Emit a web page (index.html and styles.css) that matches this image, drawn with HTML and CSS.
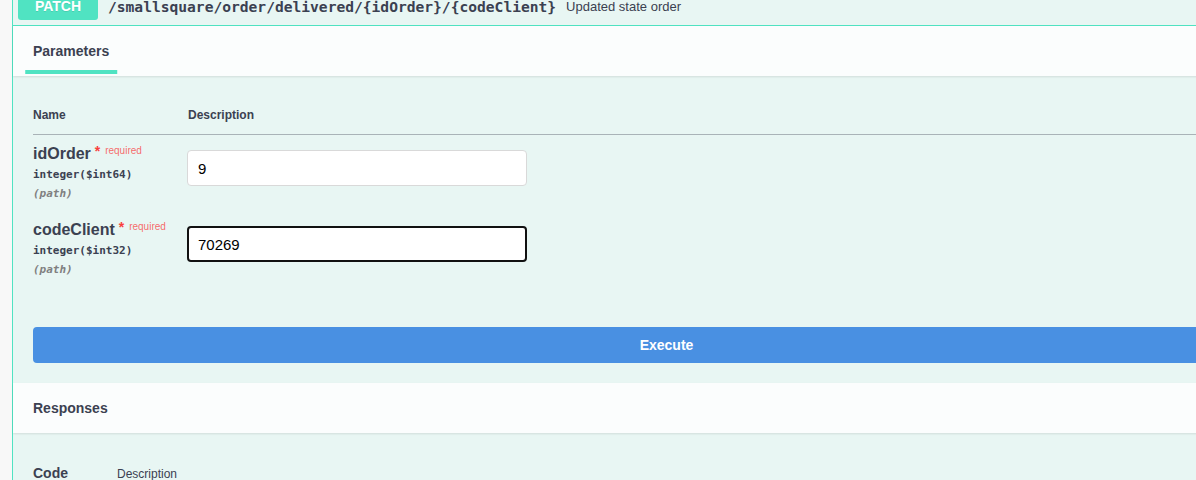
FILE: index.html
```html
<!DOCTYPE html>
<html>
<head>
<meta charset="utf-8">
<link rel="stylesheet" href="styles.css">
</head>
<body>
<div class="opblock">
  <div class="summary">
    <span class="method">PATCH</span>
    <span class="path">/smallsquare/order/delivered/{idOrder}/{codeClient}</span>
    <span class="summary-desc">Updated state order</span>
  </div>
  <div class="section-header">
    <h4 class="tab-item"><span>Parameters</span></h4>
  </div>
  <div class="table-container">
    <table class="params">
      <thead>
        <tr><th class="col-name">Name</th><th>Description</th></tr>
      </thead>
      <tbody>
        <tr>
          <td class="col-name">
            <div class="pname">idOrder<span class="star">&nbsp;*</span><span class="req">required</span></div>
            <div class="ptype">integer<span class="fmt">($int64)</span></div>
            <div class="pin">(path)</div>
          </td>
          <td class="col-desc"><input class="field" type="text" value="9"></td>
        </tr>
        <tr>
          <td class="col-name">
            <div class="pname">codeClient<span class="star">&nbsp;*</span><span class="req">required</span></div>
            <div class="ptype">integer<span class="fmt">($int32)</span></div>
            <div class="pin">(path)</div>
          </td>
          <td class="col-desc"><input class="field focused" type="text" value="70269"></td>
        </tr>
      </tbody>
    </table>
  </div>
  <div class="execute-wrapper">
    <button class="execute">Execute</button>
  </div>
  <div class="section-header">
    <h4 class="plain">Responses</h4>
  </div>
  <div class="responses-inner">
    <table class="responses">
      <thead>
        <tr><th class="col-code">Code</th><th class="col-rdesc">Description</th></tr>
      </thead>
    </table>
  </div>
</div>
</body>
</html>
```

FILE: styles.css
```css
html, body {
  margin: 0;
  padding: 0;
}
body {
  background: #f8f8f8;
  overflow: hidden;
  width: 1196px;
  height: 480px;
  font-family: "Liberation Sans", Arial, sans-serif;
  color: #3b4151;
}
.opblock {
  box-sizing: border-box;
  width: 1309px;
  margin: -14px 0 0 12px;
  border: 1px solid #50e3c2;
  border-radius: 4px;
  background: #e8f6f3;
}
.summary {
  display: flex;
  align-items: center;
  padding: 5px;
  border-bottom: 1px solid #50e3c2;
}
.method {
  min-width: 80px;
  padding: 6px 0;
  background: #50e3c2;
  color: #fff;
  font-weight: 700;
  font-size: 14px;
  line-height: 16px;
  text-align: center;
  border-radius: 3px;
  text-shadow: 0 1px 0 rgba(0,0,0,.1);
}
.path {
  margin-left: 10px;
  font-family: "DejaVu Sans Mono", "Liberation Mono", monospace;
  font-weight: 700;
  font-size: 14.6px;
  color: #3b4151;
}
.summary-desc {
  margin-left: 10px;
  font-size: 13px;
  color: #3b4151;
}
.section-header {
  box-sizing: border-box;
  display: flex;
  align-items: center;
  min-height: 50px;
  padding: 8px 20px;
  background: rgba(255,255,255,.8);
  box-shadow: 0 1px 2px rgba(0,0,0,.1);
}
.section-header h4 {
  margin: 0;
  font-size: 14px;
  font-weight: 700;
  line-height: 16px;
  color: #3b4151;
}
.tab-item span {
  position: relative;
  display: inline-block;
}
.tab-item span::after {
  content: "";
  position: absolute;
  left: 50%;
  bottom: -15px;
  width: 120%;
  height: 4px;
  transform: translateX(-50%);
  background: #50e3c2;
}
.table-container {
  padding: 20px;
}
table {
  border-collapse: collapse;
  width: 100%;
}
.params th {
  text-align: left;
  font-size: 12px;
  font-weight: 700;
  line-height: 14px;
  padding: 12px 0;
  border-bottom: 1px solid #a9b3b7;
  color: #3b4151;
}
.params .col-name {
  width: 155px;
}
.params td {
  padding: 10px 0;
  vertical-align: top;
}
.pname {
  font-size: 16px;
  font-weight: 700;
  line-height: 18px;
  color: #3b4151;
}
.star {
  color: #f93e3e;
  font-size: 14px;
  position: relative;
  top: -3px;
}
.req {
  color: rgba(255,0,0,.6);
  font-size: 10px;
  font-weight: 400;
  padding: 0 5px;
  position: relative;
  top: -5px;
}
.ptype {
  padding: 2px 0 0;
  font-family: "DejaVu Sans Mono", "Liberation Mono", monospace;
  font-size: 11px;
  font-weight: 700;
  line-height: 15px;
  color: #3b4151;
}
.pin {
  padding: 4px 0 0;
  font-family: "DejaVu Sans Mono", "Liberation Mono", monospace;
  font-size: 11px;
  font-style: italic;
  font-weight: 700;
  line-height: 15px;
  color: #808080;
}
.field {
  box-sizing: border-box;
  display: block;
  width: 340px;
  height: 36px;
  margin: 5px 0 0 -1px;
  padding: 8px 10px;
  border: 1px solid #d9d9d9;
  border-radius: 4px;
  background: #fff;
  font-family: "Liberation Sans", Arial, sans-serif;
  font-size: 15px;
  color: #000;
  outline: none;
}
.field.focused {
  border: 2px solid #111;
  padding: 7px 9px;
}
.execute-wrapper {
  padding: 20px;
}
.execute {
  display: block;
  box-sizing: border-box;
  width: 100%;
  height: 36px;
  border: 2px solid #4990e2;
  border-radius: 4px;
  background: #4990e2;
  color: #fff;
  font-family: "Liberation Sans", Arial, sans-serif;
  font-size: 14px;
  font-weight: 700;
}
.responses-inner {
  padding: 20px;
}
.responses th {
  text-align: left;
  padding: 12px 0;
  color: #3b4151;
  vertical-align: bottom;
}
.responses .col-code {
  width: 84px;
  font-size: 14px;
  font-weight: 700;
}
.responses .col-rdesc {
  font-size: 12px;
  font-weight: 400;
}
```
